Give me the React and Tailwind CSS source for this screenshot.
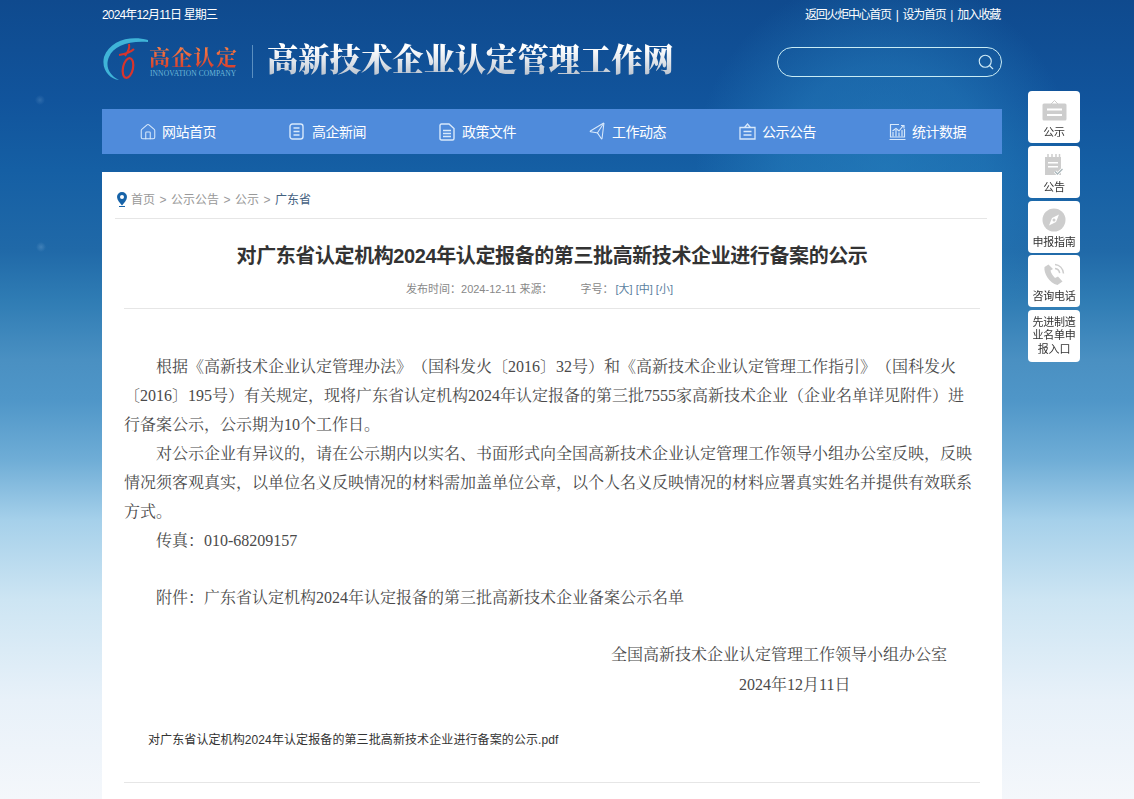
import React from "react";
import { House, Send, Search } from "lucide-react";

const Sans = "font-['Liberation_Sans','Noto_Sans_CJK_SC',sans-serif]";

function DocIcon() {
  return (
    <svg width="16" height="18" viewBox="0 0 16 18" fill="none" stroke="currentColor" strokeWidth="1.4">
      <path d="M1 2.5C1 1.6 1.6 1 2.5 1H10l5 4.5V15.5c0 .9-.6 1.5-1.5 1.5h-11C1.6 17 1 16.400 1 15.500Z" />
      <path d="M4 7.500h8M4 10.500h8M4 13.500h8" />
    </svg>
  );
}
function NewsIcon() {
  return (
    <svg width="15" height="17" viewBox="0 0 15 17" fill="none" stroke="currentColor" strokeWidth="1.400">
      <rect x="1" y="1" width="13" height="15" rx="2.500" />
      <path d="M4.500 5h6M4.500 8.500h6M4.500 12h6" />
    </svg>
  );
}
function BoardIcon() {
  return (
    <svg width="17" height="17" viewBox="0 0 17 17" fill="none" stroke="currentColor" strokeWidth="1.300">
      <path d="M1 4.500h15v11.500H1ZM5.500 4.500 8.500 1l3 3.500" />
      <path d="M4.500 8.500h8M4.500 12h8" />
    </svg>
  );
}
function StatIcon() {
  return (
    <svg width="17" height="18" viewBox="0 0 17 18" fill="none" stroke="currentColor" strokeWidth="1.200">
      <path d="M10 1.500H1.500v12.500h14V6M0.500 16.500h16" />
      <path d="M4 13.500V9M7 13.500V7M10 13.500V9.500M13 13.500V7M3.500 8 7 5.500 10 8 14 3M12 2.500h3v3" />
    </svg>
  );
}

const navItems = [
  ["网站首页", <House size={18} strokeWidth={1.4} />],
  ["高企新闻", <NewsIcon />],
  ["政策文件", <DocIcon />],
  ["工作动态", <Send size={18} strokeWidth={1.4} className="-rotate-[12deg]" />],
  ["公示公告", <BoardIcon />],
  ["统计数据", <StatIcon />],
];

function SideIcon({ kind }) {
  if (kind === 0)
    return (
      <svg width="25" height="21" viewBox="0 0 25 21">
        <path d="M9 4l3.500-3.500L16 4" fill="none" stroke="#cdcdcd" strokeWidth="1" />
        <path d="M2 3.500h21a1.500 1.500 0 0 1 1.500 1.500v14a1.500 1.500 0 0 1-1.500 1.500H2A1.500 1.500 0 0 1 .5 19V5A1.500 1.500 0 0 1 2 3.500Z" fill="#cdcdcd" />
        <path d="M5 8.500h15v2H5ZM5 14h15v2H5Z" fill="#fff" />
      </svg>
    );
  if (kind === 1)
    return (
      <svg width="20" height="22" viewBox="0 0 20 22">
        <path d="M1 3h16v18H1Z" fill="#cdcdcd" />
        <path d="M4 0v5M8 0v5M12 0v5M15.500 0v5" stroke="#cdcdcd" strokeWidth="1.500" />
        <path d="M4 8h10v1.500H4ZM4 12h10v1.500H4Z" fill="#fff" />
        <path d="M11 17.500l2.500 2.500 5-5" fill="none" stroke="#fff" strokeWidth="3" />
        <path d="M11 17.500l2.500 2.500 5-5" fill="none" stroke="#a9b6ba" strokeWidth="1.300" />
      </svg>
    );
  if (kind === 2)
    return (
      <svg width="24" height="24" viewBox="0 0 24 24">
        <circle cx="12" cy="12" r="11.500" fill="#cdcdcd" />
        <path d="M17 6.500 14 14l-7 3.500 3-7.500Z" fill="#fff" />
        <circle cx="12" cy="12" r="1.500" fill="#cdcdcd" />
      </svg>
    );
  return (
    <svg width="22" height="23" viewBox="0 0 22 23">
      <path d="M5.500 1.500 1.500 4C.5 10 6 20 14.500 22l5-3.500-4.500-5-3 1.500C10 13 8 10 7.500 7.500L10 6Z" fill="#cdcdcd" />
      <path d="M12 1.500c4.500.5 8 4 8.500 9M12 5.500c2.500.3 4.300 2 4.700 4.700" fill="none" stroke="#cdcdcd" strokeWidth="1.500" />
    </svg>
  );
}

const sideItems = ["公示", "公告", "申报指南", "咨询电话"];

export default function App() {
  return (
    <div
      className={`relative h-[799px] overflow-hidden ${Sans} bg-[radial-gradient(circle_at_40px_100px,rgba(150,190,225,0.22)_0,rgba(150,190,225,0)_5px),radial-gradient(circle_at_41px_247px,rgba(150,190,225,0.28)_0,rgba(150,190,225,0)_5px),radial-gradient(circle_at_885px_165px,rgba(45,140,200,0.5)_0,rgba(45,140,200,0.38)_100px,rgba(45,140,200,0)_190px),linear-gradient(180deg,#0f4a8e_0,#11549c_100px,#155fa4_170px,#2069a8_250px,#2f7cb4_300px,#4a90c2_360px,#4f96c8_400px,#6fadd6_460px,#a5d0ea_520px,#cde5f3_600px,#e8f1f9_700px,#f4f7fb_799px)]`}
    >
      <div className="ml-[102px] flex w-[900px] flex-col">
        <div className="flex h-[30px] items-center justify-between text-[12px] text-white">
          <span className="tracking-[-0.85px]">2024年12月11日 星期三</span>
          <span className="flex items-center pr-[2px] tracking-[-1.3px]">
            <span>返回火炬中心首页</span>
            <span className="mx-[5px]">|</span>
            <span>设为首页</span>
            <span className="mx-[5px]">|</span>
            <span>加入收藏</span>
          </span>
        </div>

        <div className="flex h-[62px] items-center justify-between">
          <div className="flex -translate-y-[2px] items-center">
            <div className="relative h-[46px] w-[138px] shrink-0">
              <svg width="46" height="46" viewBox="0 0 46 46" className="absolute left-0 top-0" fill="none">
                <path d="M54 7C36-2 9 1 2 21c-3 13 6 22 15 23C7 39 3 30 7 21 12 9 30 3 54 7Z" fill="#3fb4d8" />
                <path d="M27 8c1 4-1 8-4 12M17 19c6-1 12-3 15-6" stroke="#d8342c" strokeWidth="2" />
                <ellipse cx="26" cy="32" rx="5" ry="10" transform="rotate(12 26 32)" stroke="#d8342c" strokeWidth="2.200" />
              </svg>
              <div className="absolute left-[47px] top-[7px] whitespace-nowrap bg-[linear-gradient(180deg,#ff8a4a,#d63c2c)] bg-clip-text font-['Noto_Serif_CJK_SC',serif] text-[21px] leading-[26px] font-bold tracking-[1.300px] text-transparent">
                高企认定
              </div>
              <div className="absolute left-[48px] top-[33px] whitespace-nowrap font-['Liberation_Serif',serif] text-[7.500px] leading-[10px] tracking-[0.1px] text-[#6db7d8]">
                INNOVATION COMPANY
              </div>
            </div>
            <div className="ml-[12px] h-[33px] w-px translate-y-[2px] bg-[#5b8fc0]" />
            <div className="ml-[14px] -translate-y-[1px] whitespace-nowrap bg-[linear-gradient(180deg,#ffffff_25%,#dfe4ea_60%,#b4bdc9_100%)] bg-clip-text font-['Noto_Serif_CJK_SC','Noto_Sans_CJK_SC',serif] text-[31.300px] leading-[40px] font-black text-transparent">
              高新技术企业认定管理工作网
            </div>
          </div>
          <div className="flex h-[30px] w-[225px] translate-y-px items-center justify-end rounded-full border border-[#c9ecf5] pr-[6px] text-[#cfeaf6]">
            <Search size={18} strokeWidth={1.5} />
          </div>
        </div>

        <nav className="mt-[17px] grid h-[45px] grid-cols-6 bg-[#4f8bdb]">
          {navItems.map(([label, icon]) => (
            <div key={label} className="flex items-center pl-[37px] text-[#d8e9fb]">
              <span className="flex w-[23px] shrink-0 items-center">{icon}</span>
              <span className="whitespace-nowrap pt-[2px] text-[14px] tracking-[-0.5px] text-white">{label}</span>
            </div>
          ))}
        </nav>

        <main className="mt-[18px] h-[640px] bg-white px-[13px] pt-[19px]">
          <div className="mr-[2px] flex h-[28px] items-start border-b border-[#e6e6e6] pl-[2px] text-[12px] leading-[18px] text-[#999]">
            <svg width="10" height="15" viewBox="0 0 10 15" className="mr-[4px] mt-px">
              <path d="M5 0a5 5 0 0 1 5 5c0 3-3 6-5 8.500C3 11 0 8 0 5a5 5 0 0 1 5-5Z" fill="#1763a8" />
              <circle cx="5" cy="5" r="2" fill="#fff" />
              <path d="M2 14h6v1H2Z" fill="#1763a8" />
            </svg>
            <span>首页</span>
            <span className="mx-[4.500px]">&gt;</span>
            <span>公示公告</span>
            <span className="mx-[4.500px]">&gt;</span>
            <span>公示</span>
            <span className="mx-[4.500px]">&gt;</span>
            <span className="text-[#44617f]">广东省</span>
          </div>

          <div className="mx-[9px]">
            <h1 className="mt-[22px] text-center text-[20px] leading-[30px] font-bold tracking-[-0.4px] text-[#333]">
              对广东省认定机构2024年认定报备的第三批高新技术企业进行备案的公示
            </h1>
            <div className="mt-[10px] flex h-[28px] items-start justify-center border-b border-[#e6e6e6] pr-[25px] text-[11px] leading-[16px] text-[#888]">
              <span>发布时间：2024-12-11 来源：</span>
              <span className="ml-[28px]">字号：</span>
              <span className="ml-[2px] text-[#5a7fa0]">[大] [中] [小]</span>
            </div>

            <article className="mt-[43px] pr-[3px] font-['Liberation_Serif','Noto_Serif_CJK_SC','Noto_Sans_CJK_SC',serif] text-[16px] leading-[29px] text-[#4a4a4a] [text-spacing-trim:space-all]">
              <p className="indent-[32px]">
                根据《高新技术企业认定管理办法》（国科发火〔2016〕32号）和《高新技术企业认定管理工作指引》（国科发火〔2016〕195号）有关规定，现将广东省认定机构2024年认定报备的第三批7555家高新技术企业（企业名单详见附件）进行备案公示，公示期为10个工作日。
              </p>
              <p className="indent-[32px]">
                对公示企业有异议的，请在公示期内以实名、书面形式向全国高新技术企业认定管理工作领导小组办公室反映，反映情况须客观真实，以单位名义反映情况的材料需加盖单位公章，以个人名义反映情况的材料应署真实姓名并提供有效联系方式。
              </p>
              <p className="indent-[32px]">传真：010-68209157</p>
              <p className="h-[28px]" />
              <p className="indent-[32px]">附件：广东省认定机构2024年认定报备的第三批高新技术企业备案公示名单</p>
              <p className="h-[28px]" />
              <p className="pl-[487px]">全国高新技术企业认定管理工作领导小组办公室</p>
              <p className="mt-px pl-[615px]">2024年12月11日</p>
            </article>

            <div className="mt-[31px] h-[53px] border-b border-[#e6e6e6] pl-[24px] text-[12px] leading-[20px] tracking-[0.1px] text-[#333]">
              对广东省认定机构2024年认定报备的第三批高新技术企业进行备案的公示.pdf
            </div>
          </div>
        </main>
      </div>

      <aside className="fixed left-[1028px] top-[91px] flex w-[52px] flex-col gap-[2.750px]">
        {sideItems.map((label, i) => (
          <div key={label} className="flex h-[52px] flex-col items-center justify-end rounded-[4px] bg-white pb-[4px] text-[11px] leading-[14px] tracking-[-0.2px] text-[#333]">
            <div className="flex h-[28px] items-center justify-center">
              <SideIcon kind={i} />
            </div>
            <span className="mt-[1px] whitespace-nowrap">{label}</span>
          </div>
        ))}
        <div className="flex h-[52px] items-center justify-center rounded-[4px] bg-white px-[4px] text-center text-[11px] leading-[13.500px] tracking-[-0.2px] text-[#333]">
          先进制造业名单申报入口
        </div>
      </aside>
    </div>
  );
}
